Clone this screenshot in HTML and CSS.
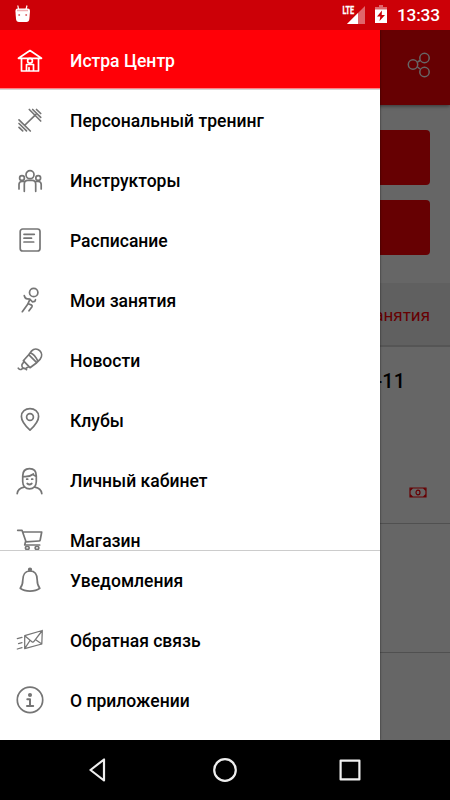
FILE: index.html
```html
<!DOCTYPE html>
<html lang="ru">
<head>
<meta charset="utf-8">
<title>Истра Центр</title>
<link rel="stylesheet" href="styles.css">
</head>
<body>
<div class="phone">
  <header class="status">
    <svg class="droid" viewBox="0 0 16 18" width="16" height="18"><path class="solid" d="M.4 6q0-2.400 2.300-2.400h10.100Q15 3.600 15 6l-.6 8q-.3 3-3 3H4Q1.300 17 1 14z"/><path class="ears" d="M3.600 4.500 2.800.5M11 4.500l1-4"/><path class="brow" d="M2 5.500h11"/><circle class="eye" cx="4.200" cy="10" r="1"/><circle class="eye" cx="11.200" cy="10" r="1"/></svg>
    <div class="status-right">
      <span class="lte">LTE</span>
      <svg class="signal" viewBox="0 0 18 18" width="18" height="18"><path class="faint" d="M0 18 18 0v18z"/><path class="solid" d="M0 18 11 7v11z"/></svg>
      <svg class="battery" viewBox="0 0 12 18" width="12" height="18"><path class="faint" d="M4 0h4v2h4v3H0V2h4z"/><path class="solid" d="M0 4.500h12V18H0z"/><path class="bolt" d="M7 5.500 2 11.500h3.300L4.500 16l5.500-6H6.700z"/></svg>
      <span class="clock">13:33</span>
    </div>
  </header>

  <main class="screen">
    <div class="page">
      <div class="appbar">
        <svg class="share" viewBox="0 0 26 28" width="26" height="28"><circle cx="7" cy="13.500" r="4.700"/><circle cx="18.500" cy="7" r="4.700"/><circle cx="18.500" cy="21" r="4.700"/><path d="m11.500 11 2.600-1.500M11.500 16l2.600 2"/></svg>
      </div>
      <div class="buttons"><div class="button"></div><div class="button"></div></div>
      <div class="section">занятия</div>
      <div class="lesson"><span class="time">-11</span>
        <svg class="money" viewBox="0 0 18 11" width="18" height="11"><path d="M1 1h16v9H1zM1 3.500 3.500 1M14.500 1 17 3.500M1 7.500 3.500 10M14.500 10 17 7.500"/><ellipse cx="9" cy="5.500" rx="2" ry="2.300"/></svg>
      </div>
      <div class="lesson second"></div>
    </div>
    <div class="scrim"></div>
    <nav class="drawer">
      <div class="list">
        <div class="row head"><svg class="icon" viewBox="0 0 30 30"><path d="M3.500 13.300 15 5.500l11.500 7.800H3.500M6.500 13.500V26h17V13.500M11.500 26v-6.500h7V26M14 22.500V26"/><circle cx="15" cy="15.800" r="2.400"/></svg><span>Истра Центр</span></div>
        <div class="row"><svg class="icon" viewBox="0 0 30 30"><path d="M10 20 20.700 9.700M14.300 4.500 25.700 16M17.700 4.500l8 7.800M21.500 4.500l4.200 4M4 14.800 15.300 26M4 18.500l7.500 7.400M4 22.300l3.700 3.500"/></svg><span>Персональный тренинг</span></div>
        <div class="row"><svg class="icon" viewBox="0 0 30 30"><circle cx="15" cy="9.700" r="4"/><circle cx="7" cy="13" r="2.400"/><circle cx="23.200" cy="13" r="2.400"/><path d="M9.300 26.300V19q0-3.700 3.500-3.700h4.400q3.500 0 3.500 3.700v7.300M4 24v-4.500q0-3 3-3h2.500M26.200 24v-4.500q0-3-3-3h-2.500"/></svg><span>Инструкторы</span></div>
        <div class="row"><svg class="icon" viewBox="0 0 30 30"><rect x="5.200" y="4" width="19.800" height="22" rx="2.500"/><path d="M9 9.300h10.300M9 13.200h7.500M9 17h9.700"/></svg><span>Расписание</span></div>
        <div class="row"><svg class="icon" viewBox="0 0 30 30"><circle cx="18.700" cy="7.500" r="4.200"/><path d="M9.300 10.700q.7 3 3 3.200l2.700.3 2.300 2.600 2.500-.4.700-1.700M15 14.200l-2.300 5.100-5.400 7.400M13.300 18.800l3.400 1.300q.8.600.3 1.600L14 25.800"/></svg><span>Мои занятия</span></div>
        <div class="row"><svg class="icon" viewBox="0 0 30 30"><path d="m13.700 9.700 8 8-6.700 5-6.700-7zM13.700 9.700l3-3.800c5-5.500 13.500 2 8.300 8.500l-3.300 3.300M15.500 8q4.200 1.200 7.300 8.200M9.300 16.300 7 19.500c-.7 2.500 1 4.800 4 3.800l3-1.800M3.300 23.200q1.700 2.300 3.700.6t4.500.8"/></svg><span>Новости</span></div>
        <div class="row"><svg class="icon" viewBox="0 0 30 30"><path d="M15 25.200C10.500 21 6.400 16 6.400 11.500 6.400 6.500 10.500 3.600 15 3.600s8.600 2.900 8.600 7.900c0 4.500-4.100 9.500-8.600 13.700z"/><circle cx="15" cy="12" r="3.400"/></svg><span>Клубы</span></div>
        <div class="row"><svg class="icon" viewBox="0 0 30 30"><path d="M7.700 11c0-4.500 2.600-7.300 6.800-7.300s6.800 2.800 6.800 7.300v5.500c0 4.500-3 7.300-6.800 7.300s-6.800-2.800-6.800-7.300zM7.700 11.500c3.300.4 7.600.1 10.800-2.500M18 9.500l3.300 2M2.200 28.700q.5-5.200 7-6.500M26.800 28.700q-.5-5.200-7-6.500M12.200 18.500q2.300 2 4.600 0"/><path d="M11.700 14.200h1M16.700 14.200h1"/></svg><span>Личный кабинет</span></div>
        <div class="row"><svg class="icon" viewBox="0 0 30 30"><path d="M2.700 5.300H7l4 11.500 13-.8q1 0 1.200-1l1.500-8H7.700M10.500 16.800l-.8 3.200h15"/><rect x="10.500" y="21.500" width="3.600" height="2.800" rx="1"/><rect x="20.200" y="21.500" width="3.600" height="2.800" rx="1"/></svg><span>Магазин</span></div>
      </div>
      <div class="footer">
        <div class="row"><svg class="icon" viewBox="0 0 30 30"><path d="M15 6C10 6 7.800 10 7.800 15c0 5-1 6.300-2.600 8.200 5 3.800 14.600 3.800 19.600 0-1.600-1.900-2.600-3.200-2.600-8.200 0-5-2.200-9-7.200-9z"/><circle class="dot" cx="15" cy="4.600" r="1.300"/></svg><span>Уведомления</span></div>
        <div class="row"><svg class="icon thin" viewBox="0 0 30 30"><path d="M9.700 10.700 27.300 5.500 26.800 19 9.700 23.700zl7.500 6.300q1 .6 1.800-.6L27.300 5.500M9.700 23.700l5.300-8.200M26.800 19l-6.500-4.500M2.300 13.700 7 12.400M3.500 18.700 7 17.700M2.300 24 7 22.700"/></svg><span>Обратная связь</span></div>
        <div class="row"><svg class="icon" viewBox="0 0 30 30"><circle cx="15" cy="14.900" r="12.700"/><circle class="dot" cx="15" cy="10" r="1.200"/><path class="bold" d="M12.300 14.200H15V21M12 21h6.200"/></svg><span>О приложении</span></div>
      </div>
    </nav>
  </main>

  <footer class="navbar">
    <svg viewBox="0 0 30 30"><path d="M5.500 15 19 4.500v21z"/></svg>
    <svg viewBox="0 0 30 30"><circle cx="15" cy="15" r="10.800"/></svg>
    <svg viewBox="0 0 30 30"><rect x="5.600" y="5.600" width="18.800" height="18.800"/></svg>
  </footer>
</div>
</body>
</html>
```
FILE: styles.css
```css
* { box-sizing: border-box; }
body { margin: 0; font-family: Roboto, "Liberation Sans", sans-serif; }
.phone { width: 450px; height: 800px; display: flex; flex-direction: column; overflow: hidden; }

.status { height: 30px; flex: none; background: #cc0007; display: flex; justify-content: space-between; padding: 5px 10px 0 15px; }
.status-right { display: flex; color: #fff; }
.lte { font: 700 10px/12px "Roboto", sans-serif; -webkit-text-stroke: .3px #fff; transform: scaleX(.72); transform-origin: right top; margin-right: -7px; }
.signal { margin-top: 1px; }
.battery { margin-left: 10px; }
.clock { width: 43px; font-size: 17.3px; font-weight: 500; line-height: 21px; margin-left: 10px; letter-spacing: -.2px; }
.solid { fill: #fff; }
.faint { fill: #e0666b; }
.bolt { fill: #cc0007; }
.ears { stroke: #fff; stroke-width: 1.2; fill: none; }
.brow { stroke: #f0b0b3; stroke-width: 1.5; }
.eye { fill: #e0666b; }

.screen { height: 710px; flex: none; position: relative; overflow: hidden; }
.page { height: 710px; background: #fff; }
.appbar { height: 75px; background: #ff0007; display: flex; justify-content: flex-end; align-items: flex-start; padding: 21px 18px 0 0; box-shadow: 0 1px 4px rgba(0, 0, 0, .5); }
.share { fill: none; stroke: #fff; stroke-width: 1.5; }
.buttons { height: 178px; padding: 25px 20px 0; display: flex; flex-direction: column; gap: 15px; }
.button { height: 55px; background: #ff0007; border-radius: 4px; }
.section { height: 64px; background: #f0f0f0; border-bottom: 2px solid #d4d4d4; padding-right: 20px; text-align: right; color: #ff0007; font-size: 17px; line-height: 65px; }
.lesson { height: 177px; border-bottom: 1px solid #c8c8c8; padding: 22px 23px 0 0; display: flex; flex-direction: column; align-items: flex-end; }
.lesson.second { height: 129px; }
.time { font-size: 20px; font-weight: 500; line-height: 24px; margin-right: 22px; }
.money { margin-top: 94px; fill: none; stroke: #ff0007; stroke-width: 1.2; }
.scrim { position: absolute; inset: 0; background: rgba(0, 0, 0, .6); }

.drawer { position: absolute; left: 0; top: 0; width: 380px; height: 710px; background: #fff; display: flex; flex-direction: column; box-shadow: 0 0 2px rgba(0, 0, 0, .6); }
.list { height: 520px; flex: none; overflow: hidden; }
.footer { border-top: 1px solid #ccc; }
.row { height: 60px; display: flex; align-items: center; padding-left: 15px; gap: 25px; font-size: 17.55px; font-weight: 500; color: #000; line-height: 24px; }
.row span { padding-top: 2px; }
.footer .row:first-child { margin-top: -1px; }
.row.head { background: linear-gradient(#ff0007 58px, #ff8085 58px, #ff8085 59px, #d4d4d4 59px); color: #fff; }
.icon { width: 30px; height: 30px; fill: none; stroke: #757575; stroke-width: 1.7; stroke-linecap: round; stroke-linejoin: round; }
.head .icon { stroke: #fff; }
.icon.thin { stroke-width: 1.25; }
.dot { fill: #757575; }
.bold { stroke-width: 2; }

.navbar { height: 60px; background: #000; display: flex; justify-content: space-between; align-items: center; padding: 0 85px; }
.navbar svg { width: 30px; height: 30px; fill: none; stroke: #eee; stroke-width: 2.2; stroke-linejoin: round; }
```
